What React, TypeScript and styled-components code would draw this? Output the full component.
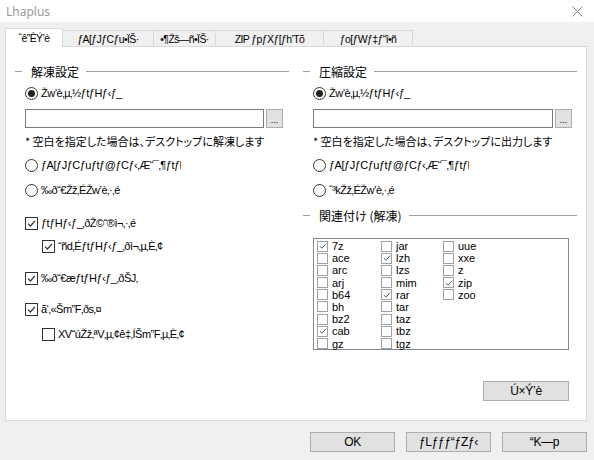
import React from "react";
import styled, { createGlobalStyle, css } from "styled-components";

const GlobalStyle = createGlobalStyle`
  html, body {
    margin: 0;
    padding: 0;
    background: #f0f0f0;
  }
  body {
    font-family: "Liberation Sans", "Noto Sans CJK JP", sans-serif;
    font-size: 11px;
    color: #000;
  }
`;

const Window = styled.div`
  width: 594px;
  height: 460px;
  background: #f0f0f0;
  display: flex;
  flex-direction: column;
  overflow: hidden;
`;

const TitleBar = styled.div`
  height: 22px;
  background: #fff;
  display: flex;
  align-items: center;
  justify-content: space-between;
  padding: 0 11px 0 6px;
  box-sizing: border-box;
`;

const Title = styled.span`
  font-family: "Noto Sans", "Open Sans", sans-serif;
  font-size: 12px;
  color: #999;
`;

const Body = styled.div`
  padding: 6px 7px 0 5px;
  display: flex;
  flex-direction: column;
`;

const TabStrip = styled.div`
  display: flex;
  align-items: flex-end;
  height: 19px;
  margin-bottom: -1px;
  position: relative;
  z-index: 1;
`;

const Tab = styled.div<{ $active?: boolean; $width: number }>`
  width: ${({ $width }) => $width}px;
  box-sizing: border-box;
  border: 1px solid #d9d9d9;
  border-bottom: none;
  margin-right: -1px;
  display: flex;
  align-items: center;
  justify-content: center;
  white-space: nowrap;
  overflow: hidden;
  font-size: 10.5px;
  letter-spacing: -0.6px;
  ${({ $active }) =>
    $active
      ? css`
          height: 19px;
          background: #fff;
          position: relative;
          z-index: 2;
        `
      : css`
          height: 17px;
          background: #f0f0f0;
          border-bottom: 1px solid #d9d9d9;
        `}
`;

const Panel = styled.div`
  width: 582px;
  height: 375px;
  box-sizing: border-box;
  border: 1px solid #d9d9d9;
  background: #fff;
  display: grid;
  grid-template-columns: 274px 274px;
  column-gap: 14px;
  padding: 17px 9px 0 9px;
`;

const Column = styled.div`
  display: flex;
  flex-direction: column;
`;

const GroupHeader = styled.div<{ $top?: number }>`
  display: flex;
  align-items: center;
  height: 14px;
  margin-top: ${({ $top }) => $top ?? 0}px;
  font-family: "Noto Sans CJK JP", sans-serif;
  font-size: 12px;
  font-feature-settings: "palt";
  &::before {
    content: "";
    width: 7px;
    height: 1px;
    background: #a0a0a0;
    margin-right: 9px;
  }
  &::after {
    content: "";
    flex: 1;
    height: 1px;
    background: #a0a0a0;
    margin-left: 7px;
  }
`;

const OptionRow = styled.div<{ $top: number; $indent?: number }>`
  display: flex;
  align-items: center;
  gap: 3px;
  height: 16px;
  margin-top: ${({ $top }) => $top}px;
  margin-left: ${({ $indent }) => 10 + ($indent ?? 0)}px;
`;

const OptionText = styled.span<{ $clip?: number }>`
  white-space: nowrap;
  letter-spacing: -0.5px;
  ${({ $clip }) =>
    $clip &&
    css`
      max-width: ${$clip}px;
      overflow: hidden;
    `}
`;

const RadioCircle = styled.span<{ $checked?: boolean }>`
  width: 13px;
  height: 13px;
  box-sizing: border-box;
  border: 1px solid #333;
  border-radius: 50%;
  background: #fff;
  display: inline-flex;
  align-items: center;
  justify-content: center;
  flex: none;
  &::after {
    content: "";
    width: 7px;
    height: 7px;
    border-radius: 50%;
    background: #222;
    display: ${({ $checked }) => ($checked ? "block" : "none")};
  }
`;

const CheckSquare = styled.span<{ $flat?: boolean }>`
  box-sizing: border-box;
  background: #fff;
  display: inline-flex;
  align-items: center;
  justify-content: center;
  flex: none;
  ${({ $flat }) =>
    $flat
      ? css`
          width: 11px;
          height: 11px;
          border: 1px solid #a0a0a0;
        `
      : css`
          width: 13px;
          height: 13px;
          border: 1px solid #333;
        `}
`;

const PathRow = styled.div`
  display: flex;
  gap: 2px;
  margin-top: 8px;
  margin-left: 10px;
  height: 19px;
`;

const PathInput = styled.div<{ $width: number }>`
  width: ${({ $width }) => $width}px;
  height: 19px;
  box-sizing: border-box;
  border: 1px solid #7a7a7a;
  background: #fff;
`;

const SmallButton = styled.div`
  width: 17px;
  height: 19px;
  box-sizing: border-box;
  border: 1px solid #adadad;
  background: #e1e1e1;
  display: flex;
  align-items: flex-end;
  justify-content: center;
  font-size: 9px;
  line-height: 14px;
`;

const Note = styled.div`
  height: 14px;
  margin-top: 6px;
  margin-left: 10px;
  font-family: "Noto Sans CJK JP", sans-serif;
  font-size: 11px;
  line-height: 14px;
  font-feature-settings: "palt";
  white-space: nowrap;
`;

const ListBox = styled.div`
  width: 256px;
  height: 112px;
  box-sizing: border-box;
  margin-top: 16px;
  margin-left: 10px;
  border: 1px solid #828790;
  background: #fff;
  padding: 1px 0 0 3px;
  display: grid;
  grid-auto-flow: column;
  grid-template-rows: repeat(9, 12.2px);
  grid-template-columns: 64px 62px 1fr;
`;

const ListItem = styled.div`
  display: flex;
  align-items: center;
  gap: 4px;
  font-size: 11px;
  line-height: 12px;
  height: 12px;
`;

const ActionButton = styled.div<{ $width?: number }>`
  width: ${({ $width }) => $width ?? 85}px;
  height: 20px;
  box-sizing: border-box;
  border: 1px solid #adadad;
  background: #e1e1e1;
  display: flex;
  align-items: center;
  justify-content: center;
  font-size: 12px;
  letter-spacing: -0.3px;
  white-space: nowrap;
`;

const DetailRow = styled.div`
  display: flex;
  justify-content: flex-end;
  margin-top: 31px;
  padding-right: 8px;
`;

const Footer = styled.div`
  display: flex;
  justify-content: flex-end;
  gap: 11px;
  padding-top: 11px;
`;

function CheckMark({ small }: { small?: boolean }) {
  const size = small ? 8 : 9;
  return (
    <svg width={size} height={size} viewBox="0 0 9 9">
      <path
        d="M1 4.6 L3.4 7 L8 1.8"
        fill="none"
        stroke={small ? "#444" : "#333"}
        strokeWidth={small ? 1 : 1.2}
      />
    </svg>
  );
}

function CloseIcon() {
  return (
    <svg width="11" height="11" viewBox="0 0 11 11">
      <path d="M0.5 0.5 L10.5 10.5 M10.5 0.5 L0.5 10.5" stroke="#888" strokeWidth="1" />
    </svg>
  );
}

type OptionProps = {
  kind: "radio" | "check";
  checked?: boolean;
  top: number;
  indent?: number;
  clip?: number;
  label: string;
};

function Option({ kind, checked, top, indent, clip, label }: OptionProps) {
  return (
    <OptionRow $top={top} $indent={indent}>
      {kind === "radio" ? (
        <RadioCircle $checked={checked} />
      ) : (
        <CheckSquare>{checked && <CheckMark />}</CheckSquare>
      )}
      <OptionText $clip={clip}>{label}</OptionText>
    </OptionRow>
  );
}

const tabs = [
  { label: "ˆê”ÊÝ’è", width: 58 },
  { label: "ƒA[ƒJƒCƒu•ÏŠ·", width: 92 },
  { label: "•¶Žš—ñ•ÏŠ·", width: 63 },
  { label: "ZIP ƒpƒXƒ[ƒh’Tõ", width: 109 },
  { label: "ƒo[ƒWƒ‡ƒ“î•ñ", width: 90 },
];

const extensions: { name: string; checked?: boolean }[] = [
  { name: "7z", checked: true },
  { name: "ace" },
  { name: "arc" },
  { name: "arj" },
  { name: "b64" },
  { name: "bh" },
  { name: "bz2" },
  { name: "cab", checked: true },
  { name: "gz" },
  { name: "jar" },
  { name: "lzh", checked: true },
  { name: "lzs" },
  { name: "mim" },
  { name: "rar", checked: true },
  { name: "tar" },
  { name: "taz" },
  { name: "tbz" },
  { name: "tgz" },
  { name: "uue" },
  { name: "xxe" },
  { name: "z" },
  { name: "zip", checked: true },
  { name: "zoo" },
];

function Destination({
  title,
  note,
  inputWidth,
  lastRadio,
}: {
  title: string;
  note: string;
  inputWidth: number;
  lastRadio: string;
}) {
  return (
    <>
      <GroupHeader>{title}</GroupHeader>
      <Option kind="radio" checked top={7} label="Žw’è‚µ‚½ƒtƒHƒ‹ƒ_" />
      <PathRow>
        <PathInput $width={inputWidth} />
        <SmallButton>...</SmallButton>
      </PathRow>
      <Note>{note}</Note>
      <Option
        kind="radio"
        top={9}
        clip={140}
        label="ƒA[ƒJƒCƒuƒtƒ@ƒCƒ‹‚Æ“¯‚¶ƒtƒHƒ‹ƒ_"
      />
      <Option kind="radio" top={9} label={lastRadio} />
    </>
  );
}

export default function App() {
  return (
    <>
      <GlobalStyle />
      <Window>
        <TitleBar>
          <Title>Lhaplus</Title>
          <CloseIcon />
        </TitleBar>
        <Body>
          <TabStrip>
            {tabs.map((t, i) => (
              <Tab key={t.label} $active={i === 0} $width={t.width}>
                {t.label}
              </Tab>
            ))}
          </TabStrip>
          <Panel>
            <Column>
              <Destination
                title="解凍設定"
                note="* 空白を指定した場合は、デスクトップに解凍します"
                inputWidth={239}
                lastRadio="‰ð“€Žž‚ÉŽw’è‚·‚é"
              />
              <Option kind="check" checked top={17} label="ƒtƒHƒ‹ƒ_‚ðŽ©“®ì¬‚·‚é" />
              <Option
                kind="check"
                checked
                top={7}
                indent={17}
                label="“ñd‚ÉƒtƒHƒ‹ƒ_‚ðì¬‚µ‚È‚¢"
              />
              <Option kind="check" checked top={16} label="‰ð“€æƒtƒHƒ‹ƒ_‚ðŠJ‚­" />
              <Option kind="check" checked top={15} label="ã‘‚«Šm”F‚ðs‚¤" />
              <Option
                kind="check"
                top={9}
                indent={17}
                label="XV“úŽž‚ªV‚µ‚¢ê‡‚ÍŠm”F‚µ‚È‚¢"
              />
            </Column>
            <Column>
              <Destination
                title="圧縮設定"
                note="* 空白を指定した場合は、デスクトップに出力します"
                inputWidth={240}
                lastRadio="ˆ³kŽž‚ÉŽw’è‚·‚é"
              />
              <GroupHeader $top={10}>関連付け (解凍)</GroupHeader>
              <ListBox>
                {extensions.map((e) => (
                  <ListItem key={e.name}>
                    <CheckSquare $flat>{e.checked && <CheckMark small />}</CheckSquare>
                    {e.name}
                  </ListItem>
                ))}
              </ListBox>
              <DetailRow>
                <ActionButton $width={86}>Ú×Ý’è</ActionButton>
              </DetailRow>
            </Column>
          </Panel>
          <Footer>
            <ActionButton>OK</ActionButton>
            <ActionButton>ƒLƒƒƒ“ƒZƒ‹</ActionButton>
            <ActionButton>“K—p</ActionButton>
          </Footer>
        </Body>
      </Window>
    </>
  );
}
